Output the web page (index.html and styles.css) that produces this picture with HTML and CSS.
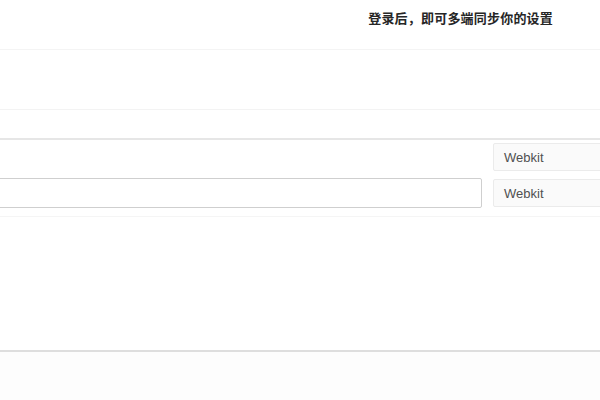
FILE: index.html
```html
<!DOCTYPE html>
<html lang="zh-CN">
<head>
    <meta charset="UTF-8">
    <meta name="viewport" content="width=device-width, initial-scale=1.0">
    <title>设置</title>
    <link rel="stylesheet" href="styles.css">
</head>
<body>
    <div class="page">
        <!-- Top bar -->
        <div class="topbar">
            <span class="login-tip">登录后，即可多端同步你的设置</span>
        </div>

        <div class="blank"></div>
        <div class="band"></div>

        <!-- Settings rows -->
        <div class="rows">
            <div class="row">
                <div class="field field-empty"></div>
                <div class="select">Webkit</div>
            </div>
            <div class="row">
                <div class="field"><input type="text" class="text-input"></div>
                <div class="select">Webkit</div>
            </div>
        </div>

        <div class="footer"></div>
    </div>
</body>
</html>
```

FILE: styles.css
```css
/* General */
body {
    margin: 0;
    padding: 0;
    background: #fff;
    font-family: "Liberation Sans", "Noto Sans CJK SC", sans-serif;
    overflow: hidden;
}

.page {
    width: 600px;
    height: 400px;
    overflow: hidden;
}

/* Top bar */
.topbar {
    height: 49px;
    display: flex;
    justify-content: flex-end;
    align-items: flex-start;
    padding-right: 47px;
    border-bottom: 1px solid #f4f4f4;
}

.login-tip {
    margin-top: 8px;
    font-size: 13px;
    font-weight: 700;
    color: #262626;
    letter-spacing: 0.2px;
}

.blank {
    height: 59px;
    border-bottom: 1px solid #f3f3f3;
}

.band {
    height: 28px;
    border-bottom: 2px solid #e6e6e6;
}

/* Rows */
.rows {
    padding-top: 2px;
    padding-bottom: 2px;
    border-bottom: 1px solid #f5f5f5;
}

.row {
    display: flex;
    align-items: center;
    gap: 11px;
    margin-bottom: 6px;
}

.field {
    width: 482px;
    height: 30px;
    flex-shrink: 0;
}

.text-input {
    box-sizing: border-box;
    width: 486px;
    height: 30px;
    margin-left: -4px;
    border: 1px solid #cfcfcf;
    border-radius: 2px;
    background: #fff;
    outline: none;
}

.select {
    box-sizing: border-box;
    width: 140px;
    height: 28px;
    flex-shrink: 0;
    padding-left: 10px;
    display: flex;
    align-items: center;
    font-size: 13px;
    color: #505050;
    background: #fafafa;
    border: 1px solid #ebebeb;
    border-radius: 2px;
}

/* Footer */
.footer {
    margin-top: 133px;
    height: 60px;
    border-top: 2px solid #dedede;
    background: #fdfdfd;
}
```
